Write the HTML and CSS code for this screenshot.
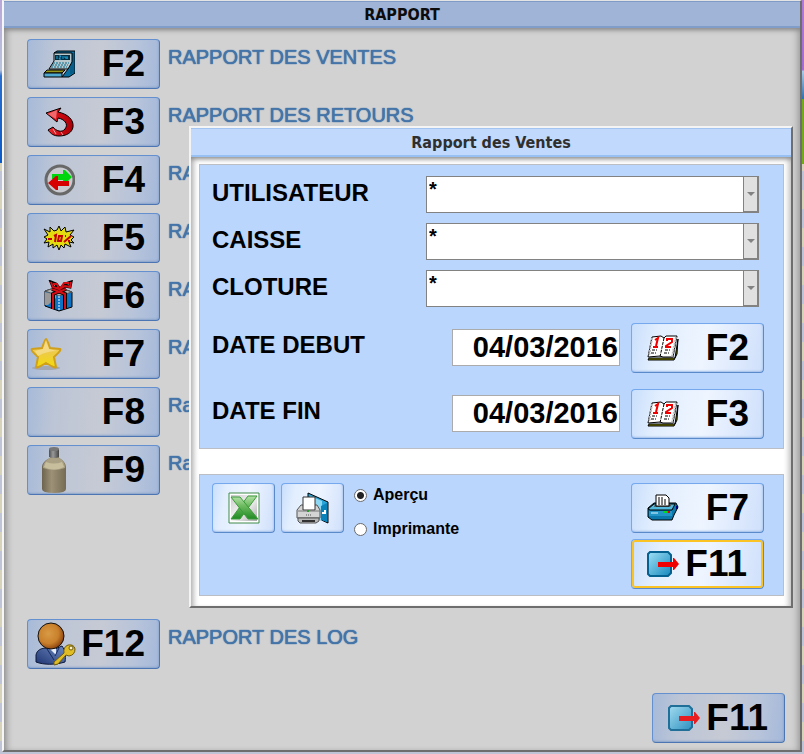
FILE: index.html
```html
<!DOCTYPE html>
<html lang="fr">
<head>
    <meta charset="UTF-8">
    <meta name="viewport" content="width=device-width, initial-scale=1.0">
    <title>Rapport</title>
    <link rel="stylesheet" href="styles.css">
</head>
<body>
    <svg class="sprite" aria-hidden="true">
        <defs>
            <linearGradient id="gExit" x1="0" y1="0" x2="1" y2="1">
                <stop offset="0" stop-color="#9fe0f5"/>
                <stop offset="1" stop-color="#1588bd"/>
            </linearGradient>
            <linearGradient id="gRed" x1="0" y1="0" x2="1" y2="0">
                <stop offset="0" stop-color="#ee3338"/>
                <stop offset="0.5" stop-color="#cc0a12"/>
                <stop offset="1" stop-color="#a90009"/>
            </linearGradient>
            <linearGradient id="gStar" x1="0" y1="0" x2="0" y2="1">
                <stop offset="0" stop-color="#f3d478"/>
                <stop offset="0.5" stop-color="#eecb45"/>
                <stop offset="1" stop-color="#f3dc08"/>
            </linearGradient>
            <linearGradient id="gBottle" x1="0" y1="0" x2="1" y2="0">
                <stop offset="0" stop-color="#6d6450"/>
                <stop offset="0.4" stop-color="#9d9277"/>
                <stop offset="1" stop-color="#756b55"/>
            </linearGradient>
            <linearGradient id="gCap" x1="0" y1="0" x2="1" y2="0">
                <stop offset="0" stop-color="#4f4f4f"/>
                <stop offset="0.4" stop-color="#999"/>
                <stop offset="1" stop-color="#444"/>
            </linearGradient>
            <radialGradient id="gHead" cx="0.4" cy="0.4" r="0.65">
                <stop offset="0" stop-color="#d99a45"/>
                <stop offset="0.6" stop-color="#c9802c"/>
                <stop offset="1" stop-color="#843c0c"/>
            </radialGradient>
            <linearGradient id="gBody" x1="0" y1="1" x2="1" y2="0">
                <stop offset="0" stop-color="#1f3572"/>
                <stop offset="1" stop-color="#6f8cc4"/>
            </linearGradient>
            <linearGradient id="gX" x1="0" y1="0" x2="0" y2="1">
                <stop offset="0" stop-color="#b4e0a8"/>
                <stop offset="0.4" stop-color="#6dbb60"/>
                <stop offset="1" stop-color="#1f8a22"/>
            </linearGradient>
            <linearGradient id="gXback" x1="0" y1="0" x2="1" y2="1">
                <stop offset="0" stop-color="#c9c9c9"/>
                <stop offset="0.5" stop-color="#f4f4f4"/>
                <stop offset="1" stop-color="#a9a9a9"/>
            </linearGradient>
        </defs>
        <symbol id="exit" viewBox="0 0 34 28">
            <path d="M3 2H21L24 5V23L21 26H3L1 24V4Z" fill="url(#gExit)" stroke="#05618f" stroke-width="2"/>
            <path d="M11 12H26V8H27L32 14L27 20H26V17H11Z" fill="#f00000"/>
        </symbol>
        <symbol id="calendar" viewBox="0 0 32 26">
            <path d="M2 23H28L31 4L30 19L27 25H1Z" fill="#808000" stroke="#000"/>
            <path d="M5 2L14 1L17 3L19 1H30L26 22H16L13 21L1 22Z" fill="#fff" stroke="#000"/>
            <path d="M29 2L25 22M5 3L2 21" stroke="#b5b5b5" stroke-width="2" stroke-dasharray="2 1"/>
            <path d="M17 3L13 22" stroke="#000" stroke-dasharray="3 1"/>
            <path d="M8 5L11 3L9 11M6 12H11" fill="none" stroke="#f00000" stroke-width="2"/>
            <path d="M20 6V4H25V7L19 11V12H24" fill="none" stroke="#f00000" stroke-width="2"/>
            <path d="M5 15H10M4 18H9M18 15H23M17 18H22" stroke="#000" stroke-dasharray="3 1 2 1"/>
        </symbol>
    </svg>

    <main class="window">
        <h1 class="titlebar">RAPPORT</h1>
        <div class="content">
            <ul class="reports">
                <li>
                    <button type="button" class="key" id="f2">
                        <svg width="32" height="28" viewBox="0 0 32 28" aria-hidden="true">
                            <path d="M11 3L14 1H32V23L26 27H19L25 19L24 14L21 12V4Z" fill="#0b6f9f" stroke="#000"/>
                            <path d="M30 3V23M28 5V24" stroke="#064c70"/>
                            <path d="M11 3H29V12L25 19H6L11 11Z" fill="#b9c8cc" stroke="#000"/>
                            <path d="M12 5H27V10H12Z" fill="#062d40"/>
                            <path d="M14 6V9M16 6H18L16 9H18M20 6V9M22 6V8H25M24 6V9" fill="none" stroke="#1ba8df"/>
                            <path d="M10 13H26M9 15H25M8 17H24" stroke="#056b8c" stroke-width="1" stroke-dasharray="2 1"/>
                            <path d="M4 20H22L19 23H1Z" fill="#96951b" stroke="#000"/>
                            <path d="M1 23H19V27H1Z" fill="#4da7ce" stroke="#000"/>
                        </svg>
                        <span>F2</span>
                    </button>
                    <label for="f2">RAPPORT DES VENTES</label>
                </li>
                <li>
                    <button type="button" class="key" id="f3">
                        <svg width="32" height="30" viewBox="0 0 32 30" aria-hidden="true">
                            <path d="M3 6L18 1L15 5C25 7 31 13 30 20C29 26 23 29 16 29C11 29 8 27 5 23L10 20C13 24 19 26 22 22C26 17 21 12 15 11L14 15Z" fill="url(#gRed)" stroke="#000"/>
                            <path d="M5 7L14 3L13 12Z" fill="#f0686c"/>
                            <path d="M10 22L13 27M18 25L20 28" stroke="#e9a0a0"/>
                        </svg>
                        <span>F3</span>
                    </button>
                    <label for="f3">RAPPORT DES RETOURS</label>
                </li>
                <li>
                    <button type="button" class="key" id="f4">
                        <svg width="32" height="32" viewBox="0 0 32 32" aria-hidden="true">
                            <circle cx="17" cy="16" r="14" fill="#c9cad0" stroke="#686868" stroke-width="3"/>
                            <path d="M9 10H20V6H22L29 13L22 20H20V16H14L9 15Z" fill="#00d60d"/>
                            <path d="M26 17V22H15V26H13L5 19L13 12H15V17Z" fill="#d60000"/>
                        </svg>
                        <span>F4</span>
                    </button>
                    <label for="f4">RA</label>
                </li>
                <li>
                    <button type="button" class="key" id="f5">
                        <svg width="32" height="26" viewBox="0 0 32 26" aria-hidden="true">
                            <path d="M1 4L7 7V2L11 6L14 5L16 1L18 6L22 2L23 7L31 5L27 10L31 12L28 15L31 18L26 17L28 22L22 19L21 23L18 20L16 25L14 20L10 23L10 19L5 22L6 17L1 18L4 14L1 12L5 10Z" fill="#e5dc10" stroke="#000"/>
                            <path d="M5 14H9M11 11L13 10L12 17M16 11H19L18 16H15ZM22 11H23M28 11L21 17M25 16H27" fill="none" stroke="#c40000" stroke-width="2"/>
                        </svg>
                        <span>F5</span>
                    </button>
                    <label for="f5">RA</label>
                </li>
                <li>
                    <button type="button" class="key" id="f6">
                        <svg width="32" height="32" viewBox="0 0 32 32" aria-hidden="true">
                            <path d="M2 11L15 7L29 12V27L16 31L2 26Z" fill="#0c73c4" stroke="#000"/>
                            <path d="M2 11L15 7L29 12L16 16Z" fill="#b4b4b4" stroke="#555"/>
                            <path d="M2 12L13 15V18L5 25L2 25Z" fill="#999"/>
                            <path d="M9 9L22 14V29M23 9L10 14V29" fill="none" stroke="#000" stroke-width="4"/>
                            <path d="M9 9L22 14V29M23 9L10 14V29" fill="none" stroke="#d40c13" stroke-width="2"/>
                            <path d="M16 16V31" stroke="#fff" stroke-dasharray="2 1"/>
                            <path d="M8 2L10 7L16 8L13 4ZM28 2L27 7L22 6L18 8L22 4Z" fill="#c6c8ce" stroke="#000" stroke-width="3"/>
                            <path d="M8 2L10 7L16 9L14 4L10 4M28 2L27 7L22 6L17 9L21 3L26 3" fill="none" stroke="#d40c13" stroke-width="2"/>
                        </svg>
                        <span>F6</span>
                    </button>
                    <label for="f6">RA</label>
                </li>
                <li>
                    <button type="button" class="key key-star" id="f7">
                        <svg width="32" height="32" viewBox="0 0 32 32" aria-hidden="true">
                            <ellipse cx="16" cy="30" rx="14" ry="2" fill="#a3a8b2"/>
                            <path d="M16 1Q17 1 20 10L30 11Q32 12 24 19L26 29Q26 31 16 25Q6 31 6 29L8 19Q0 12 2 11L12 10Q15 1 16 1Z" fill="url(#gStar)" stroke="#d0a01c" stroke-width="2"/>
                            <path d="M16 4L19 11L27 13Q17 13 8 18L5 13L13 11Z" fill="#f7df9a" opacity="0.7"/>
                        </svg>
                        <span>F7</span>
                    </button>
                    <label for="f7">RA</label>
                </li>
                <li>
                    <button type="button" class="key key-plain" id="f8">
                        <span>F8</span>
                    </button>
                    <label for="f8">Ra</label>
                </li>
                <li>
                    <button type="button" class="key key-bottle" id="f9">
                        <svg width="24" height="46" viewBox="0 0 24 46" aria-hidden="true">
                            <path d="M8 9H17V11C21 13 24 16 24 21V42Q24 46 12 46Q0 46 0 42V21C0 16 3 13 8 11Z" fill="url(#gBottle)"/>
                            <path d="M8 11H17C21 13 23 16 23 21Q12 25 1 21C1 16 4 13 8 11Z" fill="#aaa184"/>
                            <path d="M2 20Q12 25 22 20L20 15Q12 18 4 15Z" fill="#c6be9c"/>
                            <path d="M7 2Q12 -1 17 2V10Q12 12 7 10Z" fill="url(#gCap)"/>
                            <ellipse cx="12" cy="2" rx="5" ry="2" fill="#777"/>
                        </svg>
                        <span>F9</span>
                    </button>
                    <label for="f9">Ra</label>
                </li>
                <li class="apart">
                    <button type="button" class="key key-user" id="f12">
                        <svg width="41" height="44" viewBox="0 0 41 44" aria-hidden="true">
                            <path d="M1 40V33C2 28 6 26 12 26L20 27L27 24C30 28 31 34 30 40C20 43 9 43 1 40Z" fill="url(#gBody)" stroke="#0c1838"/>
                            <path d="M15 27L21 25L21 33Z" fill="#e8eef6"/>
                            <path d="M12 27L19 38M20 34L24 26" stroke="#162a5c"/>
                            <circle cx="16" cy="14" r="13" fill="url(#gHead)" stroke="#111" stroke-width="1"/>
                            <path d="M33 23Q39 22 40 27Q40 33 34 34L31 33L23 42L19 43V40L29 31Q28 25 33 23Z" fill="#e0bd25" stroke="#6e5a10"/>
                            <circle cx="36" cy="26" r="2" fill="#f7f1cc" stroke="#6e5a10"/>
                        </svg>
                        <span>F12</span>
                    </button>
                    <label for="f12">RAPPORT DES LOG</label>
                </li>
            </ul>
            <button type="button" class="key close">
                <svg width="34" height="28" aria-hidden="true"><use href="#exit"/></svg>
                <span>F11</span>
            </button>
        </div>

        <section class="dialog" role="dialog" aria-labelledby="dialogTitle">
            <h2 class="titlebar" id="dialogTitle">Rapport des Ventes</h2>
            <form class="dialog-body">
                <div class="panel filters">
                    <div class="row">
                        <label for="utilisateur">UTILISATEUR</label>
                        <div class="combo">
                            <select id="utilisateur"><option>*</option></select>
                            <span class="arrow"></span>
                        </div>
                    </div>
                    <div class="row">
                        <label for="caisse">CAISSE</label>
                        <div class="combo">
                            <select id="caisse"><option>*</option></select>
                            <span class="arrow"></span>
                        </div>
                    </div>
                    <div class="row">
                        <label for="cloture">CLOTURE</label>
                        <div class="combo">
                            <select id="cloture"><option>*</option></select>
                            <span class="arrow"></span>
                        </div>
                    </div>
                    <div class="row row-date">
                        <label for="debut">DATE DEBUT</label>
                        <input type="text" id="debut" class="date" value="04/03/2016">
                        <button type="button" class="key">
                            <svg width="32" height="26" aria-hidden="true"><use href="#calendar"/></svg>
                            <span>F2</span>
                        </button>
                    </div>
                    <div class="row row-date">
                        <label for="fin">DATE FIN</label>
                        <input type="text" id="fin" class="date" value="04/03/2016">
                        <button type="button" class="key">
                            <svg width="32" height="26" aria-hidden="true"><use href="#calendar"/></svg>
                            <span>F3</span>
                        </button>
                    </div>
                </div>

                <div class="panel actions">
                    <button type="button" class="key key-icon" aria-label="Excel">
                        <svg width="32" height="32" viewBox="0 0 32 32" aria-hidden="true">
                            <path d="M1 1H31V31H1Z" fill="#fff" stroke="#3f8a48"/>
                            <path d="M3 3H29V29H3Z" fill="url(#gXback)"/>
                            <path d="M20 4H29L12 27H3Z" fill="url(#gX)" stroke="#3c9a3c"/>
                            <path d="M3 5H12L30 27H20Z" fill="url(#gX)" stroke="#3c9a3c"/>
                        </svg>
                    </button>
                    <button type="button" class="key key-icon" aria-label="Aperçu avant impression">
                        <svg width="34" height="34" viewBox="0 0 34 34" aria-hidden="true">
                            <path d="M12 2L32 11V32L12 23Z" fill="#2ba4d8" stroke="#000" stroke-width="1"/>
                            <path d="M14 5L26 10V30L14 24Z" fill="#8ed7f2"/>
                            <path d="M25 15L31 12V31L25 29Z" fill="#0b82ba"/>
                            <path d="M26 22H29M29 19V23" stroke="#fff" stroke-width="2"/>
                            <path d="M5 14H21L24 19V27H1V19Z" fill="#d4d4d4" stroke="#555"/>
                            <path d="M7 6H19V19H7Z" fill="#fff" stroke="#333"/>
                            <path d="M2 20H24" stroke="#777"/>
                            <path d="M2 27H23V30L20 32H4L2 30Z" fill="#b8b8b8" stroke="#555"/>
                            <path d="M6 30H19" stroke="#333" stroke-width="2"/>
                            <path d="M10 24H16" stroke="#555" stroke-dasharray="1 1"/>
                            <path d="M12 19V21" stroke="#2b9b2b" stroke-width="2"/>
                        </svg>
                    </button>
                    <div class="choices">
                        <label><input type="radio" name="sortie" checked>Aperçu</label>
                        <label><input type="radio" name="sortie">Imprimante</label>
                    </div>
                    <div class="keys">
                        <button type="button" class="key">
                            <svg width="32" height="28" viewBox="0 0 32 28" aria-hidden="true">
                                <path d="M1 14L7 9H29L31 13L27 21L25 26H5L1 23Z" fill="#0b78ac" stroke="#000"/>
                                <path d="M1 15L7 10H28L25 16H3Z" fill="#53b9dc" stroke="#000"/>
                                <path d="M8 10H25L23 13H7Z" fill="#4d5a5e"/>
                                <path d="M9 1H19L22 4V12H9Z" fill="#fff" stroke="#000"/>
                                <path d="M11 4H17M11 6H20M11 8H20M11 10H20" stroke="#000" stroke-dasharray="2 1"/>
                                <path d="M2 17H25V22H2Z" fill="#2295c7"/>
                                <path d="M4 19H11" stroke="#d9f4ff"/>
                                <path d="M17 18H20" stroke="#00e020" stroke-width="2"/>
                                <path d="M21 18H23" stroke="#e00000" stroke-width="2"/>
                                <path d="M30 12V15" stroke="#00007c" stroke-width="2"/>
                            </svg>
                            <span>F7</span>
                        </button>
                        <button type="button" class="key key-focus">
                            <svg width="34" height="28" aria-hidden="true"><use href="#exit"/></svg>
                            <span>F11</span>
                        </button>
                    </div>
                </div>
            </form>
        </section>
    </main>
</body>
</html>
```

FILE: styles.css
```css
* {
    box-sizing: border-box;
}
body {
    margin: 0;
    min-height: 100vh;
    display: flex;
    padding: 0 2px 2px 2px;
    font-family: "Liberation Sans", Arial, sans-serif;
    /* what is left of the desktop around the window */
    background:
        linear-gradient(#b9a6d8 0, #b9c4dc 70px, #2a6fd0 76px, #0a59c8 163px, transparent 163px) left top / 2px 100% no-repeat,
        linear-gradient(#b07ad6 0, #a66ad0 70px, #a9cbe8 71px, #2f6fae 99px, #76a81b 99px, #76a81b 164px, transparent 164px) right top / 2px 100% no-repeat,
        repeating-linear-gradient(#d6d3ba 0, #d6d3ba 19px, #bfc4d6 19px, #bfc4d6 38px);
}
.sprite {
    position: absolute;
    width: 0;
    height: 0;
}
h1, h2, ul {
    margin: 0;
    padding: 0;
}
.window {
    position: relative;
    flex: 1;
    display: flex;
    flex-direction: column;
    background-color: #d2d2d2;
    border: 2px solid #6e6e6e;
    border-top: 1px solid #e4e4e4;
    border-left-color: #f6f6f6;
}
.titlebar {
    height: 27px;
    border-top: 1px solid #7f9bc6;
    border-bottom: 2px solid #809dca;
    background-color: #9fb4d6;
    font-family: "DejaVu Sans Condensed", Tahoma, "Noto Sans", sans-serif;
    font-size: 16px;
    font-weight: bold;
    line-height: 26px;
    text-align: center;
    color: #0c0c0c;
}
.content {
    flex: 1;
    display: flex;
    flex-direction: column;
    padding: 11px 15px 7px 23px;
    box-shadow: inset 0 5px 5px -3px #888, inset 6px 0 7px -4px #888, inset -6px 0 7px -4px #999;
}
.reports {
    list-style: none;
    display: flex;
    flex-direction: column;
    gap: 8px;
}
.reports li {
    display: flex;
    gap: 8px;
}
.reports label {
    padding-top: 6px;
    font-size: 20px;
    line-height: 24px;
    color: #4474a8;
    text-shadow: 0 0 1px #4474a8, 0 0 1px #4474a8;
}
.reports .apart {
    margin-top: 116px;
}
.key {
    width: 133px;
    height: 50px;
    flex-shrink: 0;
    display: flex;
    align-items: center;
    justify-content: space-between;
    padding: 0 14px 0 15px;
    border: 1px solid #76a8ee;
    border-radius: 4px;
    border-right-color: #5b8acb;
    border-bottom-color: #5b8acb;
    background: linear-gradient(100deg, #c9dffc 0, #e2eefe 20%, #eef5ff 55%, #dde9fd 80%, #cfe0fb 100%);
    box-shadow: inset 0 -2px 2px -1px #9fbde8, inset -2px 0 2px -1px #b4cdf2;
    font-family: inherit;
    font-size: 37px;
    font-weight: bold;
    line-height: 48px;
    color: #000;
    cursor: pointer;
}
.content .key {
    border-color: #6490cf #4b75b3 #4b75b3 #6490cf;
    background: linear-gradient(95deg, #a6bad9 0, #bcc5d6 20%, #c6cad4 55%, #b8c4da 80%, #a5b9db 100%);
    box-shadow: inset 0 -2px 2px -1px #8aa3ca, inset -2px 0 2px -1px #93abd0;
}
.content .key-star {
    padding-left: 2px;
}
.content .key-plain {
    justify-content: flex-end;
}
.content .key-user {
    padding-left: 7px;
}
.content .key-bottle {
    padding-left: 14px;
}
.content .close {
    align-self: flex-end;
    margin-top: auto;
    padding-right: 16px;
}
.content .close svg {
    opacity: 0.85;
}

.dialog {
    position: absolute;
    top: 125px;
    left: 185px;
    right: 7px;
    background-color: #fff;
    border: 2px solid #6e6e6e;
    border-top-color: #f4f4f4;
    border-left-color: #f4f4f4;
}
.dialog .titlebar {
    height: 29px;
    border-top-color: #a3c3f0;
    border-bottom-color: #98c0f3;
    background-color: #c0d9fd;
    line-height: 28px;
    color: #2f2f2f;
}
.dialog-body {
    display: flex;
    flex-direction: column;
    gap: 25px;
    padding: 7px 7px 10px 8px;
    box-shadow: inset 0 5px 5px -3px #888, inset 6px 0 5px -3px #bbb, inset -6px 0 5px -3px #ccc;
}
.panel {
    border: 1px solid #bbbec4;
    background-color: #bbd6fc;
}
.filters {
    display: flex;
    flex-direction: column;
    gap: 10px;
    padding: 11px 19px 9px 12px;
}
.row {
    display: flex;
    align-items: center;
    font-size: 24px;
    font-weight: bold;
    line-height: 34px;
}
.row label {
    flex: 1;
    padding-bottom: 3px;
}
.row-date {
    margin-top: 6px;
}
.row-date label {
    padding-bottom: 6px;
}
.combo {
    position: relative;
    width: 333px;
    height: 37px;
    margin-right: 5px;
}
.combo select {
    appearance: none;
    display: block;
    width: 100%;
    height: 100%;
    padding: 0 18px 12px 2px;
    border: 1px solid #828282;
    border-radius: 0;
    background-color: #fff;
    font-family: inherit;
    font-size: 20px;
    font-weight: bold;
    color: #000;
}
.arrow {
    position: absolute;
    top: 0;
    right: 0;
    bottom: 0;
    width: 16px;
    display: flex;
    align-items: center;
    justify-content: center;
    border: 1px solid #828282;
    border-right-width: 2px;
    border-bottom-width: 2px;
    background-color: #e0e0e0;
    pointer-events: none;
}
.arrow::after {
    content: "";
    border: 4px solid transparent;
    border-top-color: #828282;
    border-bottom: 0;
}
.date {
    width: 168px;
    height: 37px;
    margin: 0 11px 2px 0;
    padding: 0 1px;
    border: 1px solid #ababab;
    background-color: #fff;
    font-family: inherit;
    font-size: 29px;
    font-weight: bold;
    text-align: right;
    color: #000;
}
.actions {
    display: flex;
    align-items: flex-start;
    padding: 8px 19px 6px 12px;
}
.key-icon {
    width: 63px;
    margin-right: 6px;
    padding: 0;
    justify-content: center;
}
.choices {
    flex: 1;
    display: flex;
    flex-direction: column;
    gap: 14px;
    padding: 2px 0 0 4px;
    font-size: 16px;
    font-weight: bold;
    line-height: 20px;
}
.choices label {
    display: flex;
    align-items: center;
}
.choices input {
    appearance: none;
    width: 13px;
    height: 13px;
    margin: 0 6px 0 0;
    border: 1px solid #6a6a6a;
    border-radius: 50%;
    background-color: #fff;
}
.choices input:checked {
    background-image: radial-gradient(#222 0, #222 3px, #fff 4px);
}
.keys {
    display: flex;
    flex-direction: column;
    gap: 6px;
}
.key-focus {
    padding-right: 16px;
    box-shadow: inset 0 0 0 2px #fbc424;
}
```
